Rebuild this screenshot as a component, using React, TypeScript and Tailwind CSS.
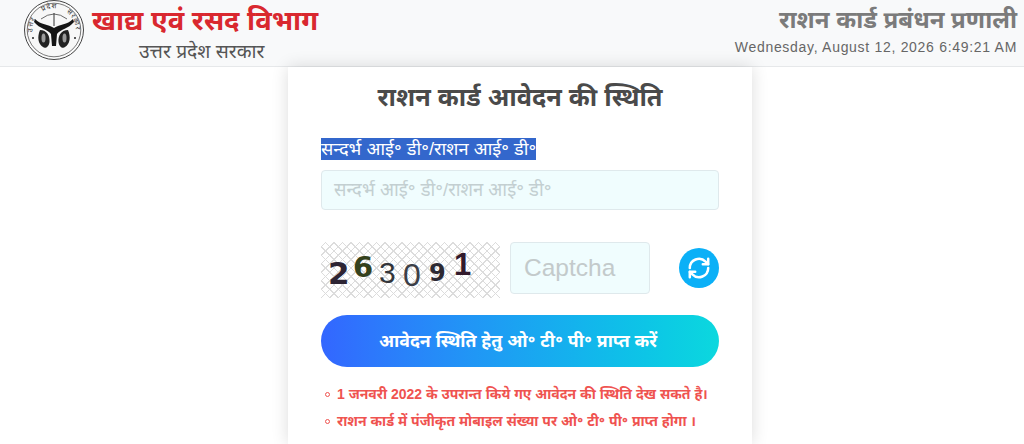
const sans = "font-['Liberation_Sans','Noto_Sans','Noto_Sans_CJK_SC',sans-serif]";

function Emblem() {
  return (
    <svg width="60" height="60" viewBox="0 0 60 60" className="shrink-0">
      <circle cx="30" cy="30" r="29.5" fill="#fbfbfb" stroke="#444" strokeWidth="1" />
      <circle cx="30" cy="30" r="26.8" fill="#f7f7f7" stroke="#555" strokeWidth="0.8" />
      <defs>
        <path id="ring" d="M9 35 A21.6 21.6 0 1 1 51 35" />
      </defs>
      <text fontSize="7" fill="#333" letterSpacing="0.9" wordSpacing="7" fontFamily="'Noto Sans',sans-serif">
        <textPath href="#ring" startOffset="3">उत्तर प्रदेश सरकार</textPath>
      </text>
      <path d="M17 19 Q30 9 43 19" stroke="#444" strokeWidth="0.8" fill="none" />
      <path d="M30 13 L30 26" stroke="#333" strokeWidth="1" />
      <path d="M11 19 C17 25 24 24 30 28 C36 24 43 25 49 19 L50 22 C44 29 37 29 33 34 L32 46 L28 46 L27 34 C23 29 16 29 10 22 Z" fill="#151515" />
      <path d="M16 30 C23 30 26 36 25.5 42 C25 47 21 49 19 47 C14 44 13 37 16 30 Z" fill="#222" />
      <path d="M44 30 C37 30 34 36 34.5 42 C35 47 39 49 41 47 C46 44 47 37 44 30 Z" fill="#222" />
      <ellipse cx="19.5" cy="38" rx="2" ry="4.5" fill="#9a9a9a" />
      <ellipse cx="40.5" cy="38" rx="2" ry="4.5" fill="#9a9a9a" />
      <circle cx="9" cy="38" r="1" fill="#222" />
      <circle cx="51" cy="38" r="1" fill="#222" />
    </svg>
  );
}

function Digit({ c, cls }: { c: string; cls: string }) {
  return <span className={cls}>{c}</span>;
}

export default function App() {
  return (
    <div className={`h-[444px] w-[1024px] overflow-hidden bg-white ${sans}`}>
      <header className="flex h-[67px] items-start justify-between border-b border-[#e6e8ea] bg-[#f8f9fa] pl-6 pr-[7px]">
        <div className="flex items-start gap-2">
          <Emblem />
          <div className="flex flex-col items-start">
            <div className="mt-[3px] text-[27.4px] leading-[36px] font-bold text-[#d9282f]">खाद्य एवं रसद विभाग</div>
            <div className="ml-[47px] text-[19.3px] leading-[26px] text-[#555]">उत्तर प्रदेश सरकार</div>
          </div>
        </div>
        <div className="flex flex-col items-end">
          <div className="mt-[2px] text-[24px] leading-[36px] font-bold text-[#7b7b7b]">राशन कार्ड प्रबंधन प्रणाली</div>
          <div className="text-[14px] leading-[18px] tracking-[0.7px] text-[#666]">Wednesday, August 12, 2026 6:49:21 AM</div>
        </div>
      </header>
      <main className="flex pl-[288px]">
        <section className="h-[377px] w-[464px] bg-white px-[33px] shadow-[0_0_16px_rgba(0,0,0,0.14)]">
          <h1 className="mt-[12px] text-center text-[25.3px] leading-[36px] font-bold text-[#4a4a4a]">राशन कार्ड आवेदन की स्थिति</h1>
          <label className="mt-[22px] block">
            <span className="bg-[#3367cc] py-[1px] text-[18.2px] leading-[24px] text-white">सन्दर्भ आई॰ डी॰/राशन आई॰ डी॰</span>
          </label>
          <div className="mt-2 flex h-10 w-[398px] items-center rounded-[4px] border border-[#dfe9ec] bg-[#f0fdfe] px-[12px] text-[18.4px] text-[#c3cfd1]">
            सन्दर्भ आई॰ डी॰/राशन आई॰ डी॰
          </div>
          <div className="mt-8 flex items-start">
            <div className="flex h-[56px] w-[179px] items-center bg-[repeating-linear-gradient(45deg,#dcdcdc_0,#dcdcdc_1px,transparent_1px,transparent_6px),repeating-linear-gradient(-45deg,#dcdcdc_0,#dcdcdc_1px,transparent_1px,transparent_6px)] pl-[7px] leading-none font-['DejaVu_Sans',sans-serif]">
              <Digit c="2" cls="mt-[6px] w-[25px] text-[31px] font-bold text-[#2d2433]" />
              <Digit c="6" cls="-mt-[6px] w-[26px] text-[29px] font-bold text-[#34411c]" />
              <Digit c="3" cls="mt-[6px] w-[24px] font-['Liberation_Sans',sans-serif] text-[30px] text-[#33353a]" />
              <Digit c="0" cls="mt-[10px] w-[26px] font-['Liberation_Sans',sans-serif] text-[32px] text-[#3c4048]" />
              <Digit c="9" cls="mt-[5px] w-[25px] text-[24px] font-bold text-[#2d2a33]" />
              <Digit c="1" cls="-mt-[11px] font-['Liberation_Sans',sans-serif] text-[31px] font-bold text-[#321a2c]" />
            </div>
            <div className="ml-[10px] flex h-[52px] w-[140px] items-center rounded-[4px] border border-[#dfe9ec] bg-[#f0fdfe] px-[13px] text-[24.5px] text-[#c3cacb]">Captcha</div>
            <button className="mt-[6px] ml-[29px] flex h-10 w-10 items-center justify-center rounded-full bg-[#0bb0f7]">
              <svg width="26" height="26" viewBox="0 0 24 24" fill="none" stroke="#fff" strokeWidth="2.3" strokeLinecap="round" strokeLinejoin="round">
                <path d="M3.5 12a8.5 8.5 0 0 1 14.6-5.9L20.5 8.5" />
                <path d="M20.5 3.5v5h-5" />
                <path d="M20.5 12a8.5 8.5 0 0 1-14.6 5.9L3.5 15.5" />
                <path d="M8.5 15.5h-5v5" />
              </svg>
            </button>
          </div>
          <button className="mt-[17px] block h-[52px] w-[398px] rounded-full bg-gradient-to-r from-[#3366ff] to-[#0cd8de] pr-[4px] text-[17.7px] font-bold text-white">
            आवेदन स्थिति हेतु ओ॰ टी॰ पी॰ प्राप्त करें
          </button>
          <ul className="mt-[14px] text-[14px] leading-[27px] font-bold whitespace-nowrap text-[#ef5350]">
            <li className="flex items-center gap-[7px] pl-[4px]"><span className="h-[5px] w-[5px] rounded-full border border-[#ef5350]"></span>1 जनवरी 2022 के उपरान्त किये गए आवेदन की स्थिति देख सकते है।</li>
            <li className="flex items-center gap-[7px] pl-[4px]"><span className="h-[5px] w-[5px] rounded-full border border-[#ef5350]"></span>राशन कार्ड में पंजीकृत मोबाइल संख्या पर ओ॰ टी॰ पी॰ प्राप्त होगा ।</li>
          </ul>
        </section>
      </main>
    </div>
  );
}
